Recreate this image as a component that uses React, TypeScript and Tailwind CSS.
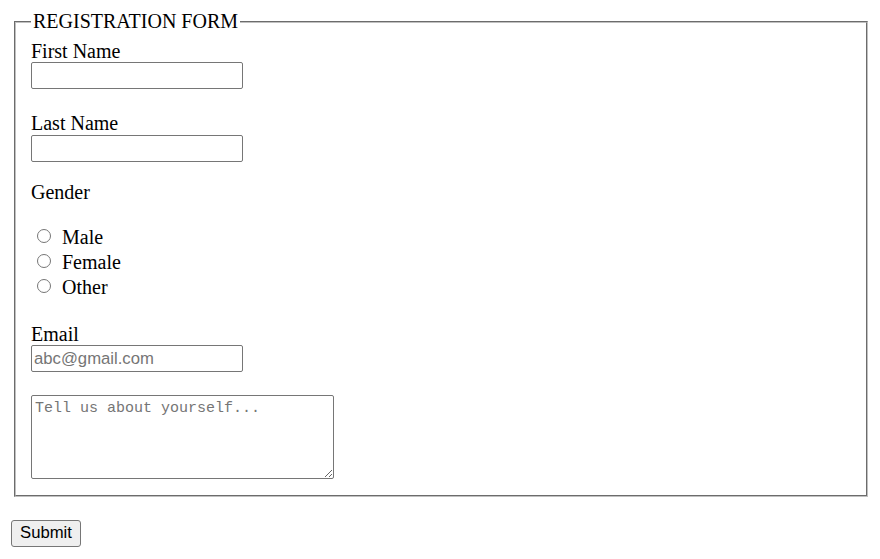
const field =
  "h-[27px] w-[212px] rounded-[2px] border border-[#767676] bg-white px-[2px] font-['Liberation_Sans',Arial,sans-serif] text-[16.7px] leading-[normal] text-black placeholder:text-[#757575] outline-none";

const genders = ['Male', 'Female', 'Other'];

export default function App() {
  return (
    <div className="min-h-screen bg-white pt-[10px] font-['Liberation_Serif','Times_New_Roman',serif] text-[20px] leading-[23px] text-black">
      <form onSubmit={(e) => e.preventDefault()}>
        <fieldset className="ml-[14px] mr-[12px] border-2 border-[#c0c0c0] [border-style:groove] px-[15px] pt-[6px] pb-[16px]">
          <legend className="px-[2px]">REGISTRATION FORM</legend>
          <div className="flex flex-col items-start">
            {/* Name */}
            <label htmlFor="fname" className="pt-[2px] leading-[21px]">First Name</label>
            <input id="fname" type="text" className={field} />
            <label htmlFor="lname" className="mt-[23px]">Last Name</label>
            <input id="lname" type="text" className={field} />

            {/* Gender */}
            <p className="mt-[18px] pt-[2px] leading-[21px]">Gender</p>
            <div className="mt-[21px] flex flex-col">
              {genders.map((g) => (
                <label key={g} className="flex h-[25px] items-start">
                  <input
                    type="radio"
                    name="gender"
                    value={g.toLowerCase()}
                    className="ml-[6px] mr-[11px] mt-[5px] h-[14px] w-[14px] appearance-none rounded-full border border-[#767676] bg-white"
                  />
                  <span className="mt-[2px]">{g}</span>
                </label>
              ))}
            </div>

            {/* Email */}
            <label htmlFor="email" className="mt-[21px] pt-[4px] leading-[21px]">Email</label>
            <input id="email" type="email" placeholder="abc@gmail.com" className={`${field}`} />

            {/* About */}
            <textarea
              placeholder="Tell us about yourself..."
              className="mt-[23px] h-[84px] w-[303px] resize rounded-[2px] border border-[#767676] bg-white px-[3px] pt-[4px] pb-[2px] font-['Liberation_Mono',monospace] text-[15px] leading-[18px] text-black placeholder:text-[#757575] outline-none"
            />
          </div>
        </fieldset>
        <button
          type="submit"
          className="ml-[11px] mt-[23px] block h-[27px] w-[70px] rounded-[3px] border border-[#767676] bg-[#efefef] pb-[2px] font-['Liberation_Sans',Arial,sans-serif] text-[16.7px] leading-[normal] text-black"
        >
          Submit
        </button>
      </form>
    </div>
  );
}
